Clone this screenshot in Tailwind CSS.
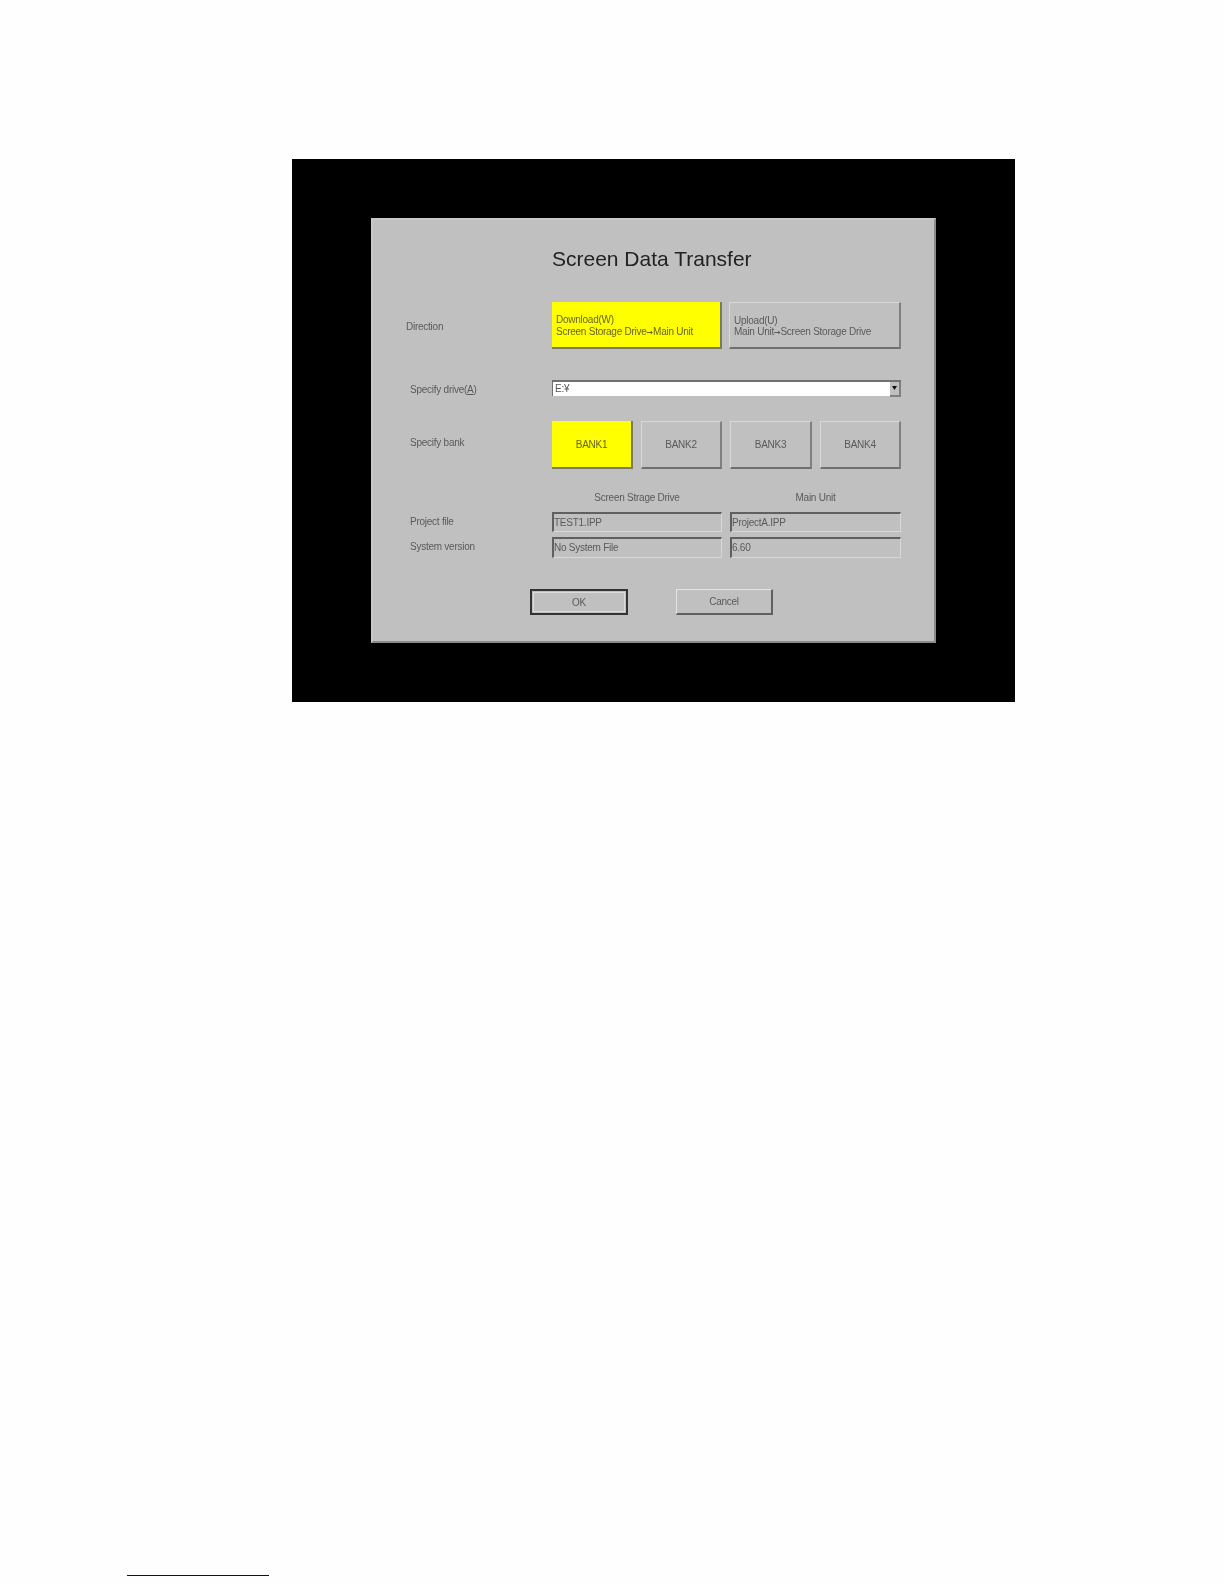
<!DOCTYPE html>
<html>
<head>
<meta charset="utf-8">
<script src="https://cdn.jsdelivr.net/npm/@tailwindcss/browser@4"></script>
</head>
<body class="bg-[#fefefe] font-['Liberation_Sans',Arial,sans-serif]">
<div class="h-[1584px] overflow-hidden relative">
  <div class="pt-[159px] pl-[292px]">
    <div class="w-[723px] h-[543px] bg-black pt-[59px] pl-[79px]">
      <div class="w-[565px] h-[425px] bg-[#c0c0c0] border-t-2 border-l-2 border-r-2 border-b-2 border-t-[#c8c8c8] border-l-[#c8c8c8] border-r-[#8c8c8c] border-b-[#8c8c8c] blur-[0.6px] text-[10px] tracking-[-0.25px] text-[#5a5a5a] flex flex-col">
        <div class="h-[82px] pl-[179px] pt-[25px] text-[21px] tracking-normal leading-[28px] text-[#222]">Screen Data Transfer</div>

        <div class="flex h-[47px] items-center">
          <div class="w-[179px] pl-[33px] pt-[2px]">Direction</div>
          <div class="w-[170px] h-full bg-[#ffff00] border-b-2 border-r-2 border-[#7a7a60] pl-[4px] pt-[3px] flex flex-col justify-center leading-[11.5px] text-[#66661c]">
            <span>Download(W)</span><span>Screen Storage Drive<span class="font-['DejaVu_Sans'] font-bold text-[8px]">→</span>Main Unit</span>
          </div>
          <div class="ml-[7px] w-[172px] h-full border-t border-l border-b-2 border-r-2 border-t-[#d8d8d8] border-l-[#d8d8d8] border-b-[#707070] border-r-[#808080] pl-[4px] pt-[3px] flex flex-col justify-center leading-[11.5px]">
            <span>Upload(U)</span><span>Main Unit<span class="font-['DejaVu_Sans'] font-bold text-[8px]">→</span>Screen Storage Drive</span>
          </div>
        </div>

        <div class="flex h-[16px] items-center mt-[31px]">
          <div class="w-[179px] pl-[37px] pt-[2px]">Specify drive(<span class="underline">A</span>)</div>
          <div class="w-[349px] h-full bg-white border-t-2 border-l border-[#707070] flex items-center justify-between pl-[2px] text-[#555]">
            <span class="pb-[1px]">E:¥</span>
            <div class="w-[11px] h-[15px] bg-[#c0c0c0] border-r-2 border-b-2 border-[#808080] flex items-center justify-center">
              <svg width="5" height="4" viewBox="0 0 5 4"><path d="M0 0h5L2.5 4z" fill="#111"/></svg>
            </div>
          </div>
        </div>

        <div class="flex h-[48px] items-center mt-[25px]">
          <div class="w-[179px] pl-[37px] pb-[5px]">Specify bank</div>
          <div class="w-[81px] h-full bg-[#ffff00] border-b-2 border-r-2 border-[#7a7a60] flex items-center justify-center text-[#66661c]">BANK1</div>
          <div class="ml-[8px] w-[81px] h-full border-t border-l border-b-2 border-r-2 border-t-[#d8d8d8] border-l-[#d8d8d8] border-b-[#707070] border-r-[#808080] flex items-center justify-center">BANK2</div>
          <div class="ml-[8px] w-[82px] h-full border-t border-l border-b-2 border-r-2 border-t-[#d8d8d8] border-l-[#d8d8d8] border-b-[#707070] border-r-[#808080] flex items-center justify-center">BANK3</div>
          <div class="ml-[8px] w-[81px] h-full border-t border-l border-b-2 border-r-2 border-t-[#d8d8d8] border-l-[#d8d8d8] border-b-[#707070] border-r-[#808080] flex items-center justify-center">BANK4</div>
        </div>

        <div class="flex h-[14px] items-center mt-[21px]">
          <div class="w-[179px]"></div>
          <div class="w-[170px] text-center">Screen Strage Drive</div>
          <div class="ml-[8px] w-[171px] text-center">Main Unit</div>
        </div>

        <div class="flex h-[20px] items-center mt-[8px]">
          <div class="w-[179px] pl-[37px] pb-[2px]">Project file</div>
          <div class="w-[170px] h-full border-t-2 border-l-2 border-b border-r border-t-[#606060] border-l-[#606060] border-b-[#d8d8d8] border-r-[#d8d8d8] pb-[1px] flex items-center">TEST1.IPP</div>
          <div class="ml-[8px] w-[171px] h-full border-t-2 border-l-2 border-b border-r border-t-[#606060] border-l-[#606060] border-b-[#d8d8d8] border-r-[#d8d8d8] pb-[1px] flex items-center">ProjectA.IPP</div>
        </div>

        <div class="flex h-[21px] items-center mt-[5px]">
          <div class="w-[179px] pl-[37px] pb-[2px]">System version</div>
          <div class="w-[170px] h-full border-t-2 border-l-2 border-b border-r border-t-[#606060] border-l-[#606060] border-b-[#d8d8d8] border-r-[#d8d8d8] pb-[1px] flex items-center">No System File</div>
          <div class="ml-[8px] w-[171px] h-full border-t-2 border-l-2 border-b border-r border-t-[#606060] border-l-[#606060] border-b-[#d8d8d8] border-r-[#d8d8d8] pb-[1px] flex items-center">6.60</div>
        </div>

        <div class="flex h-[26px] mt-[31px] pl-[157px]">
          <div class="w-[98px] h-full border-2 border-[#333] p-[1px]">
            <div class="w-full h-full border border-[#dcdcdc] flex items-center justify-center">OK</div>
          </div>
          <div class="ml-[48px] w-[97px] h-full border-t border-l border-b-2 border-r-2 border-t-[#e4e4e4] border-l-[#e4e4e4] border-b-[#606060] border-r-[#606060] flex items-center justify-center">Cancel</div>
        </div>
      </div>
    </div>
  </div>
  <div class="mt-[873px] ml-[127px] w-[142px] h-[1px] bg-[#00009c]"></div>
</div>
</body>
</html>
